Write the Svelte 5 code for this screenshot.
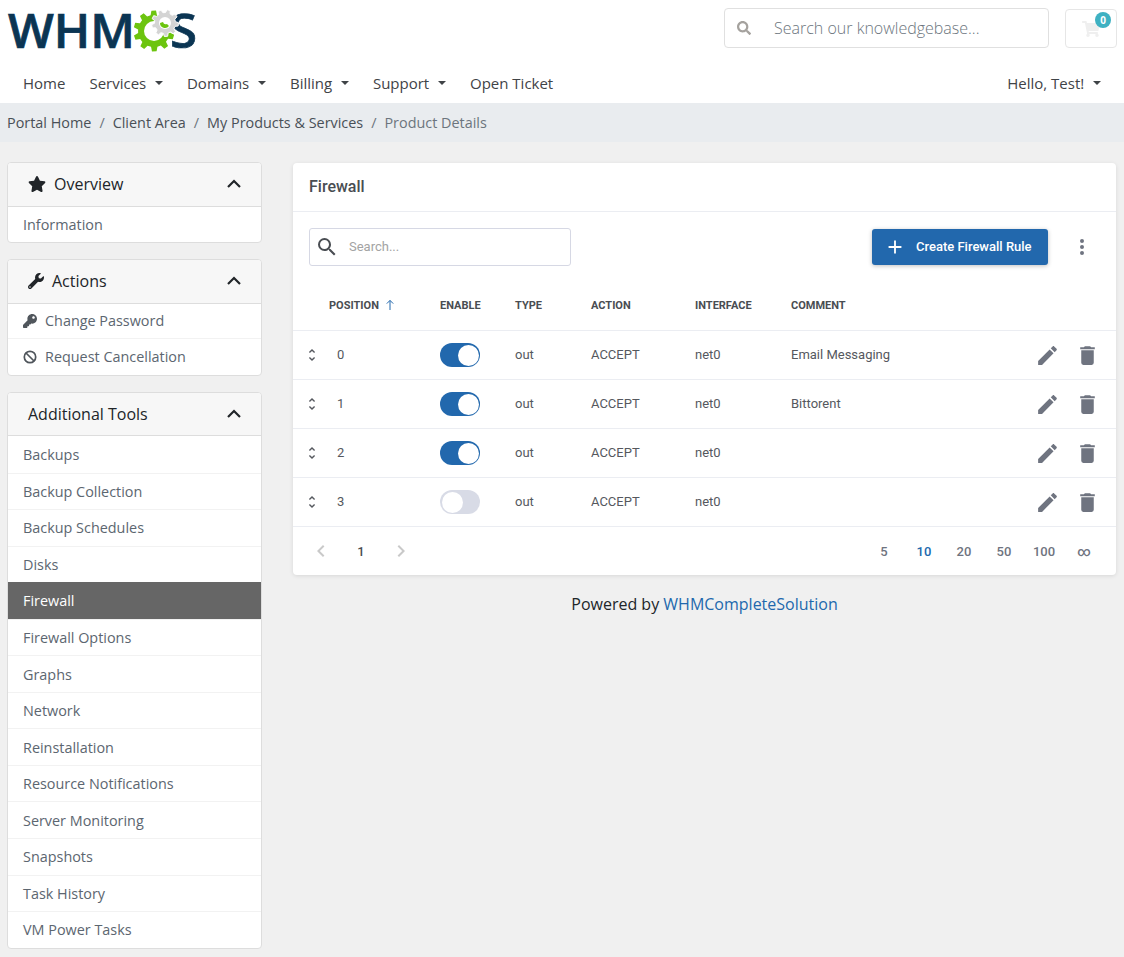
<script lang="ts">
  const navItems = [
    { label: "Home" },
    { label: "Services", caret: true },
    { label: "Domains", caret: true },
    { label: "Billing", caret: true },
    { label: "Support", caret: true },
    { label: "Open Ticket" },
  ];

  const tools = [
    "Backups", "Backup Collection", "Backup Schedules", "Disks", "Firewall",
    "Firewall Options", "Graphs", "Network", "Reinstallation",
    "Resource Notifications", "Server Monitoring", "Snapshots", "Task History", "VM Power Tasks",
  ];

  const rules = [
    { pos: 0, on: true, comment: "Email Messaging" },
    { pos: 1, on: true, comment: "Bittorent" },
    { pos: 2, on: true, comment: "" },
    { pos: 3, on: false, comment: "" },
  ];

  const pageSizes = ["5", "10", "20", "50", "100", "∞"];

  // cog outline for the logo
  function gear(cx: number, cy: number, outer: number, inner: number, teeth: number, rot = 0) {
    const step = (Math.PI * 2) / teeth;
    const pts: string[] = [];
    for (let i = 0; i < teeth; i++) {
      const a = rot + i * step;
      const at = (r: number, t: number) =>
        `${(cx + r * Math.cos(a + t * step)).toFixed(2)},${(cy + r * Math.sin(a + t * step)).toFixed(2)}`;
      pts.push(at(inner, -0.32), at(outer, -0.18), at(outer, 0.18), at(inner, 0.32));
    }
    return "M" + pts.join("L") + "Z";
  }
</script>

<div class="page">
  <header class="top">
    <div class="brand-row">
      <svg class="logo" width="200" height="56" viewBox="0 0 200 56" aria-label="WHMCS">
        <text x="8" y="46" class="logo-text" textLength="127" lengthAdjust="spacingAndGlyphs">WHM</text>
        <path d={gear(154, 29, 20.5, 16, 10, 0.3)} fill="#6cc40f" />
        <circle cx="154" cy="29" r="10" fill="#fff" />
        <text x="170" y="46" class="logo-text" textLength="27" lengthAdjust="spacingAndGlyphs">S</text>
        <path d={gear(165, 21, 13.5, 10.5, 9, 0.1)} fill="#d4d4d4" stroke="#fff" stroke-width="1" />
        <circle cx="165" cy="21" r="6" fill="#fff" />
        <path d="M160 21a5 5 0 0 0 9 3l-2-2a3 3 0 0 1-4-2z" fill="#6cc40f" />
      </svg>
      <div class="top-tools">
        <div class="kb-search">
          <svg class="kb-icon" viewBox="0 0 512 512" width="14" height="14"><path d="M505 442.7L405.3 343c-4.5-4.5-10.6-7-17-7H372c27.6-35.3 44-79.7 44-128C416 93.1 322.9 0 208 0S0 93.1 0 208s93.1 208 208 208c48.3 0 92.7-16.4 128-44v16.3c0 6.4 2.5 12.5 7 17l99.7 99.7c9.4 9.4 24.6 9.4 33.9 0l28.3-28.3c9.4-9.4 9.4-24.6.1-34zM208 336c-70.7 0-128-57.2-128-128 0-70.7 57.2-128 128-128 70.7 0 128 57.2 128 128 0 70.7-57.2 128-128 128z" /></svg>
          <span>Search our knowledgebase...</span>
        </div>
        <div class="cart">
          <svg viewBox="0 0 576 512" width="18" height="16"><path d="M528.12 301.319l47.273-208C578.806 78.301 567.391 64 551.99 64H159.208l-9.166-44.81C147.758 8.021 137.93 0 126.529 0H24C10.745 0 0 10.745 0 24v16c0 13.255 10.745 24 24 24h69.883l70.248 343.435C147.325 417.1 136 435.222 136 456c0 30.928 25.072 56 56 56s56-25.072 56-56c0-15.674-6.447-29.835-16.824-40h209.647C430.447 426.165 424 440.326 424 456c0 30.928 25.072 56 56 56s56-25.072 56-56c0-22.172-12.888-41.332-31.579-50.405l5.517-24.276c3.413-15.018-8.002-29.319-23.403-29.319H218.117l-6.545-32h293.145c11.206 0 20.92-7.754 23.403-18.681z" /></svg>
          <span class="badge">0</span>
        </div>
      </div>
    </div>
    <nav class="nav">
      <div class="nav-left">
        {#each navItems as item}
          <span class="nav-item">{item.label}{#if item.caret}<i class="caret"></i>{/if}</span>
        {/each}
      </div>
      <span class="nav-item">Hello, Test!<i class="caret"></i></span>
    </nav>
  </header>

  <div class="crumbs">
    <span>Portal Home</span><i>/</i><span>Client Area</span><i>/</i><span>My Products &amp; Services</span><i>/</i><span class="here">Product Details</span>
  </div>

  <div class="content">
    <aside class="side">
      <section class="panel">
        <div class="panel-head">
          <svg class="head-icon" viewBox="0 0 576 512" width="18" height="16"><path d="M259.3 17.8L194 150.2 47.9 171.5c-26.2 3.8-36.7 36.1-17.7 54.6l105.7 103-25 145.5c-4.5 26.3 23.2 46 46.4 33.7L288 439.6l130.7 68.7c23.2 12.2 50.9-7.4 46.4-33.7l-25-145.5 105.7-103c19-18.5 8.5-50.8-17.7-54.6L382 150.2 316.7 17.8c-11.7-23.6-45.6-23.9-57.4 0z" /></svg>
          <span>Overview</span>
          <svg class="chev" viewBox="0 0 16 10" width="16" height="10"><path d="M2 8l6-6 6 6" /></svg>
        </div>
        <div class="panel-item">Information</div>
      </section>

      <section class="panel">
        <div class="panel-head">
          <svg class="head-icon" viewBox="0 0 512 512" width="16" height="16"><path d="M507.73 109.1c-2.24-9.03-13.54-12.09-20.12-5.51l-74.36 74.36-67.88-11.31-11.31-67.88 74.36-74.36c6.62-6.62 3.43-17.9-5.66-20.16-47.38-11.74-99.55.91-136.58 37.93-39.64 39.64-50.55 97.1-34.05 147.2L18.74 402.76c-24.99 24.99-24.99 65.51 0 90.5 24.99 24.99 65.51 24.99 90.5 0l213.21-213.21c50.12 16.71 107.47 5.68 147.37-34.22 37.07-37.07 49.7-89.32 37.91-136.73zM64 472c-13.25 0-24-10.75-24-24 0-13.26 10.75-24 24-24s24 10.74 24 24c0 13.25-10.75 24-24 24z" /></svg>
          <span>Actions</span>
          <svg class="chev" viewBox="0 0 16 10" width="16" height="10"><path d="M2 8l6-6 6 6" /></svg>
        </div>
        <div class="panel-item with-icon">
          <svg viewBox="0 0 512 512" width="14" height="14"><path d="M512 176.001C512 273.203 433.202 352 336 352c-11.22 0-22.19-1.062-32.827-3.069l-24.012 27.014A23.999 23.999 0 0 1 261.223 384H224v40c0 13.255-10.745 24-24 24h-40v40c0 13.255-10.745 24-24 24H24c-13.255 0-24-10.745-24-24v-78.059c0-6.365 2.529-12.47 7.029-16.971l161.802-161.802C163.108 213.814 160 195.271 160 176 160 78.798 238.797.001 335.999 0 433.488-.001 512 78.511 512 176.001zM336 128c0 26.51 21.49 48 48 48s48-21.49 48-48-21.49-48-48-48-48 21.49-48 48z" /></svg>
          Change Password
        </div>
        <div class="panel-item with-icon">
          <svg viewBox="0 0 14 14" width="14" height="14"><circle cx="7" cy="7" r="5.7" fill="none" stroke="currentColor" stroke-width="1.7" /><path d="M3 3l8 8" stroke="currentColor" stroke-width="1.7" /></svg>
          Request Cancellation
        </div>
      </section>

      <section class="panel">
        <div class="panel-head">
          <span class="plain-title">Additional Tools</span>
          <svg class="chev" viewBox="0 0 16 10" width="16" height="10"><path d="M2 8l6-6 6 6" /></svg>
        </div>
        {#each tools as tool}
          <div class="panel-item tool" class:active={tool === "Firewall"}>{tool}</div>
        {/each}
      </section>
    </aside>

    <main class="main">
      <section class="card">
        <h2 class="card-title">Firewall</h2>
        <div class="toolbar">
          <div class="search">
            <svg viewBox="0 0 24 24" width="24" height="24"><path d="M9.5,3A6.5,6.5 0 0,1 16,9.5C16,11.11 15.41,12.59 14.44,13.73L14.71,14H15.5L20.5,19L19,20.5L14,15.5V14.71L13.73,14.44C12.59,15.41 11.11,16 9.5,16A6.5,6.5 0 0,1 3,9.5A6.5,6.5 0 0,1 9.5,3M9.5,5C7,5 5,7 5,9.5C5,12 7,14 9.5,14C12,14 14,12 14,9.5C14,7 12,5 9.5,5Z" /></svg>
            <span class="text">Search...</span>
          </div>
          <div class="toolbar-right">
            <button type="button" class="create">
              <svg viewBox="0 0 24 24" width="22" height="22"><path d="M19,13H13V19H11V13H5V11H11V5H13V11H19V13Z" /></svg>
              <span class="text">Create Firewall Rule</span>
            </button>
            <svg class="more" viewBox="0 0 24 24" width="24" height="24"><path d="M12,16A2,2 0 0,1 14,18A2,2 0 0,1 12,20A2,2 0 0,1 10,18A2,2 0 0,1 12,16M12,10A2,2 0 0,1 14,12A2,2 0 0,1 12,14A2,2 0 0,1 10,12A2,2 0 0,1 12,10M12,4A2,2 0 0,1 14,6A2,2 0 0,1 12,8A2,2 0 0,1 10,6A2,2 0 0,1 12,4Z" /></svg>
          </div>
        </div>

        <div class="row head">
          <span></span>
          <span class="pos-head">Position
            <svg viewBox="0 0 12 12" width="12" height="12"><path d="M6 11V1.5M2.8 4.6L6 1.4l3.2 3.2" /></svg>
          </span>
          <span>Enable</span>
          <span>Type</span>
          <span>Action</span>
          <span>Interface</span>
          <span>Comment</span>
          <span></span>
        </div>

        {#each rules as rule}
          <div class="row">
            <svg class="drag" viewBox="0 0 24 24" width="16" height="16"><path d="M12,18.17L8.83,15L7.41,16.41L12,21L16.59,16.41L15.17,15M12,5.83L15.17,9L16.58,7.59L12,3L7.41,7.59L8.83,9L12,5.83Z" /></svg>
            <span class="pos text">{rule.pos}</span>
            <span class="switch" class:on={rule.on}><i></i></span>
            <span class="text">out</span>
            <span class="text">ACCEPT</span>
            <span class="text">net0</span>
            <span class="text">{rule.comment}</span>
            <span class="actions">
              <svg viewBox="0 0 24 24" width="25" height="25"><path d="M20.71,7.04C21.1,6.65 21.1,6 20.71,5.63L18.37,3.29C18,2.9 17.35,2.9 16.96,3.29L15.12,5.12L18.87,8.87M3,17.25V21H6.75L17.81,9.93L14.06,6.18L3,17.25Z" /></svg>
              <svg viewBox="0 0 24 24" width="25" height="25"><path d="M19,4H15.5L14.5,3H9.5L8.5,4H5V6H19M6,19A2,2 0 0,0 8,21H16A2,2 0 0,0 18,19V7H6V19Z" /></svg>
            </span>
          </div>
        {/each}

        <div class="pager">
          <div class="pages">
            <svg viewBox="0 0 24 24" width="24" height="24"><path d="M15.41,16.58L10.83,12L15.41,7.41L14,6L8,12L14,18L15.41,16.58Z" /></svg>
            <b>1</b>
            <svg viewBox="0 0 24 24" width="24" height="24"><path d="M8.59,16.58L13.17,12L8.59,7.41L10,6L16,12L10,18L8.59,16.58Z" /></svg>
          </div>
          <div class="sizes">
            {#each pageSizes as size}
              <span class:current={size === "10"}>{size}</span>
            {/each}
          </div>
        </div>
      </section>

      <p class="powered">Powered by <span>WHMCompleteSolution</span></p>
    </main>
  </div>
</div>

<style>
  :global(body) {
    margin: 0;
    background: #f0f0f0;
    font-family: "Open Sans", "Liberation Sans", sans-serif;
    color: #343a40;
  }

  .page {
    min-height: 957px;
  }

  .top {
    background: #fff;
    height: 103px;
    box-sizing: border-box;
  }

  .brand-row {
    display: flex;
    justify-content: space-between;
    padding: 2px 7px 0 0;
    height: 63px;
    box-sizing: border-box;
  }

  .logo {
    overflow: visible;
  }

  .logo-text {
    font-family: "Open Sans", sans-serif;
    font-weight: 600;
    font-size: 47px;
    fill: #0b3553;
    stroke: #0b3553;
    stroke-width: 0.7;
  }

  .top-tools {
    display: flex;
    gap: 16px;
    padding-top: 6px;
  }

  .kb-search {
    width: 325px;
    height: 40px;
    box-sizing: border-box;
    border: 1px solid #e0e0e0;
    border-radius: 4px;
    display: flex;
    align-items: center;
    padding-left: 12px;
    gap: 23px;
    font-size: 16px;
    font-weight: 300;
    color: #6c757d;
  }

  .kb-icon {
    fill: #a5a29e;
  }

  .cart {
    position: relative;
    width: 52px;
    height: 39px;
    box-sizing: border-box;
    border: 1px solid #e6e6e6;
    border-radius: 4px;
    display: flex;
    align-items: center;
    justify-content: center;
    margin-top: 1px;
    fill: #efefef;
  }

  .badge {
    position: absolute;
    top: 2px;
    right: 5px;
    width: 16px;
    height: 16px;
    border-radius: 50%;
    background: #3eb1c2;
    color: #fff;
    font-size: 10px;
    font-weight: 700;
    text-align: center;
    line-height: 16px;
  }

  .nav {
    display: flex;
    justify-content: space-between;
    padding: 8px 23px 0 23px;
    font-size: 15px;
    line-height: 24px;
    color: #3f4347;
  }

  .nav-left {
    display: flex;
    gap: 24px;
  }

  .nav-item {
    display: inline-flex;
    align-items: center;
  }

  .caret {
    width: 0;
    height: 0;
    margin-left: 8.75px;
    border: 4.5px solid transparent;
    border-top-color: currentColor;
    border-bottom: 0;
  }

  .crumbs {
    background: #e9ecef;
    height: 39px;
    display: flex;
    align-items: center;
    padding-left: 7px;
    font-size: 14.4px;
    color: #495057;
  }

  .crumbs i {
    font-style: normal;
    color: #6c757d;
    padding: 0 8px;
  }

  .crumbs .here {
    color: #6c757d;
  }

  .content {
    display: grid;
    grid-template-columns: 255px 823px;
    gap: 31px;
    padding: 20px 7px 0;
  }

  .side {
    display: flex;
    flex-direction: column;
    gap: 16px;
  }

  .panel {
    background: #fff;
    border: 1px solid #ddd;
    border-radius: 4px;
    overflow: hidden;
  }

  .panel-head {
    height: 42.5px;
    box-sizing: content-box;
    background: #f7f7f7;
    border-bottom: 1px solid #ddd;
    display: flex;
    align-items: center;
    padding: 0 19px 0 20px;
    font-size: 16px;
    color: #212529;
  }

  .head-icon {
    fill: #212529;
    margin-right: 8px;
  }

  .plain-title {
    font-size: 16px;
  }

  .panel-head .plain-title {
    margin-right: auto;
  }

  .panel-head span:not(.plain-title) {
    margin-right: auto;
  }

  .chev {
    fill: none;
    stroke: #212529;
    stroke-width: 2.2;
  }

  .panel-item {
    height: 36.5px;
    box-sizing: border-box;
    display: flex;
    align-items: center;
    padding-left: 15px;
    font-size: 14.4px;
    color: #5c6670;
    border-top: 1px solid #f2f2f2;
  }

  .panel-item.tool {
    height: 36.55px;
  }

  .panel-head + .panel-item {
    height: 35.5px;
    border-top: 0;
  }

  .panel-head + .panel-item.tool {
    height: 36.5px;
    padding-top: 1px;
  }

  .panel-head + .panel-item.with-icon {
    height: 34.5px;
  }

  .with-icon {
    gap: 8px;
    fill: #50565c;
    color: #5c6670;
  }

  .with-icon svg {
    color: #50565c;
    flex: none;
  }

  .panel-item.active {
    background: #666;
    color: #fff;
    border-top-color: #666;
    box-shadow: 0 1px 0 #666;
  }

  .card {
    background: #fff;
    border-radius: 4px;
    box-shadow: 0 1px 4px rgba(0, 0, 0, 0.1);
    font-family: Roboto, sans-serif;
    margin-top: 1px;
  }

  .card-title {
    margin: 0;
    height: 49px;
    box-sizing: border-box;
    line-height: 47px;
    padding-left: 16px;
    border-bottom: 1px solid #ebedf2;
    font-size: 16px;
    font-weight: 500;
    color: #494d52;
  }

  .toolbar {
    display: flex;
    justify-content: space-between;
    align-items: center;
    box-sizing: border-box;
    padding: 16px 22px 0 16px;
    height: 54px;
  }

  .text {
    padding-bottom: 2px;
  }

  .search {
    width: 262px;
    height: 38px;
    box-sizing: border-box;
    border: 1px solid #d6d8e4;
    border-radius: 3px;
    display: flex;
    align-items: center;
    padding-left: 5px;
    gap: 10px;
    font-size: 13px;
    color: #a3a3a3;
    fill: #494d52;
  }

  .toolbar-right {
    display: flex;
    align-items: center;
    gap: 22px;
  }

  .create {
    width: 176px;
    height: 36px;
    border: 0;
    border-radius: 3px;
    background: #2268ad;
    color: #fff;
    font-family: inherit;
    font-size: 13px;
    font-weight: 500;
    display: flex;
    align-items: center;
    padding: 0 0 0 12px;
    gap: 10px;
    fill: #fff;
    box-shadow: 0 1px 4px rgba(0, 0, 0, 0.25);
  }

  .more {
    fill: #6f7480;
  }

  .row {
    display: grid;
    grid-template-columns: 36px 111px 75px 76px 104px 96px 1fr auto;
    align-items: center;
    height: 49px;
    box-sizing: border-box;
    border-bottom: 1px solid #ebedf2;
    font-size: 13px;
    color: #55585e;
  }

  .row.head {
    height: 51px;
    margin-top: 14px;
    font-size: 11px;
    font-weight: 700;
    text-transform: uppercase;
    color: #494d52;
  }

  .pos-head {
    display: inline-flex;
    align-items: center;
    gap: 5px;
  }

  .pos-head svg {
    fill: none;
    stroke: #2268ad;
    stroke-width: 1;
  }

  .drag {
    fill: #55585e;
    margin-left: 11px;
  }

  .pos {
    padding-left: 8px;
  }

  .switch {
    width: 40px;
    height: 24px;
    box-sizing: border-box;
    border-radius: 12px;
    background: #d8dbe6;
    display: flex;
    align-items: center;
    padding: 1.5px;
  }

  .switch i {
    width: 21px;
    height: 21px;
    border-radius: 50%;
    background: #fff;
  }

  .switch.on {
    background: #2268ad;
    justify-content: flex-end;
  }

  .actions {
    display: flex;
    gap: 15px;
    padding-right: 16px;
    fill: #6f7480;
  }

  .pager {
    height: 48px;
    display: flex;
    justify-content: space-between;
    align-items: center;
    padding: 0 12px 0 16px;
    font-size: 13px;
    color: #6f7480;
  }

  .pages {
    display: flex;
    align-items: center;
    fill: #c9c9c9;
  }

  .pages b {
    width: 56px;
    text-align: center;
    font-weight: 500;
    color: #494d52;
  }

  .sizes {
    display: flex;
  }

  .sizes span {
    width: 40px;
    text-align: center;
    font-weight: 500;
  }

  .sizes .current {
    color: #2268ad;
  }

  .powered {
    margin: 19px 0 0;
    text-align: center;
    font-size: 16px;
    line-height: 20px;
    color: #212529;
    font-family: "Open Sans", sans-serif;
  }

  .powered span {
    color: #2268ad;
  }
</style>
